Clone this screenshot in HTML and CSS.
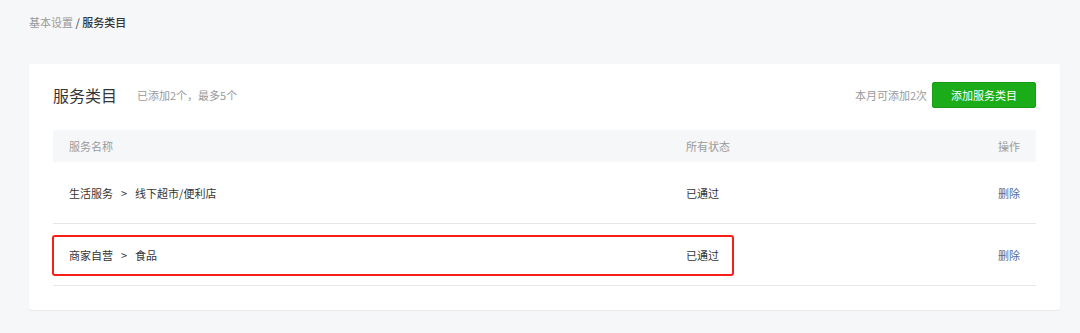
FILE: index.html
```html
<!DOCTYPE html>
<html lang="zh-CN">
<head>
<meta charset="utf-8">
<link rel="stylesheet" href="styles.css">
</head>
<body>
<div class="page">
  <div class="crumb"><span class="crumb-parent">基本设置</span> / <span class="crumb-cur">服务类目</span></div>
  <div class="card">
    <div class="card-head">
      <div class="head-left">
        <span class="title">服务类目</span>
        <span class="sub">已添加2个，最多5个</span>
      </div>
      <div class="head-right">
        <span class="quota">本月可添加2次</span>
        <button class="btn">添加服务类目</button>
      </div>
    </div>
    <div class="table">
      <div class="row thead">
        <div class="c-name">服务名称</div>
        <div class="c-status">所有状态</div>
        <div class="c-op">操作</div>
      </div>
      <div class="row">
        <div class="c-name">生活服务<span class="sep">&gt;</span>线下超市/便利店</div>
        <div class="c-status">已通过</div>
        <div class="c-op"><a class="link">删除</a></div>
      </div>
      <div class="row hl-row">
        <div class="hl"></div>
        <div class="c-name">商家自营<span class="sep">&gt;</span>食品</div>
        <div class="c-status">已通过</div>
        <div class="c-op"><a class="link">删除</a></div>
      </div>
    </div>
  </div>
</div>
</body>
</html>
```
FILE: styles.css
```css
* { box-sizing: border-box; }
html, body { margin: 0; padding: 0; }
body {
  background: #f6f7f9;
  font-family: "Noto Sans CJK SC", "Liberation Sans", sans-serif;
  color: #353535;
  width: 1080px;
  height: 333px;
  overflow: hidden;
}
.page { padding: 14px 20px 0 29px; }
.crumb { font-size: 11px; line-height: 16px; color: #353535; }
.crumb-parent { color: #9a9a9a; }
.crumb-cur { font-weight: 500; }
.card {
  margin-top: 34px;
  width: 1031px;
  background: #fff;
  border-radius: 3px;
  box-shadow: 0 1px 1px rgba(0,0,0,0.06);
  padding: 18px 24px 24px 24px;
}
.card-head {
  display: flex;
  justify-content: space-between;
  align-items: center;
  height: 26px;
  margin-bottom: 22px;
}
.head-left { display: flex; align-items: center; }
.title { font-size: 16px; line-height: 24px; color: #353535; }
.sub { font-size: 11px; color: #9a9a9a; margin-left: 20px; }
.head-right { display: flex; align-items: center; }
.quota { font-size: 11px; color: #9a9a9a; margin-right: 5px; }
.btn {
  width: 104px;
  height: 26px;
  border: 1px solid #179b16;
  background: #1aad19;
  color: #fff;
  font-family: inherit;
  font-size: 11px;
  border-radius: 2px;
  padding: 0;
}
.table { width: 983px; }
.row {
  position: relative;
  display: flex;
  align-items: center;
  height: 62px;
  border-bottom: 1px solid #e7e7eb;
  font-size: 11px;
  color: #353535;
}
.row.thead {
  height: 32px;
  background: #f6f7f9;
  border-bottom: none;
  color: #9a9a9a;
}
.c-name { width: 633px; padding-left: 16px; }
.c-status { flex: 1; }
.c-op { width: 100px; text-align: right; padding-right: 16px; }
.sep { margin: 0 8px; }
.link { color: #576b95; cursor: pointer; }
.hl {
  position: absolute;
  left: -1px;
  top: 11px;
  width: 682px;
  height: 41px;
  border: 2px solid #fa1e18;
  border-radius: 3px;
}
```
